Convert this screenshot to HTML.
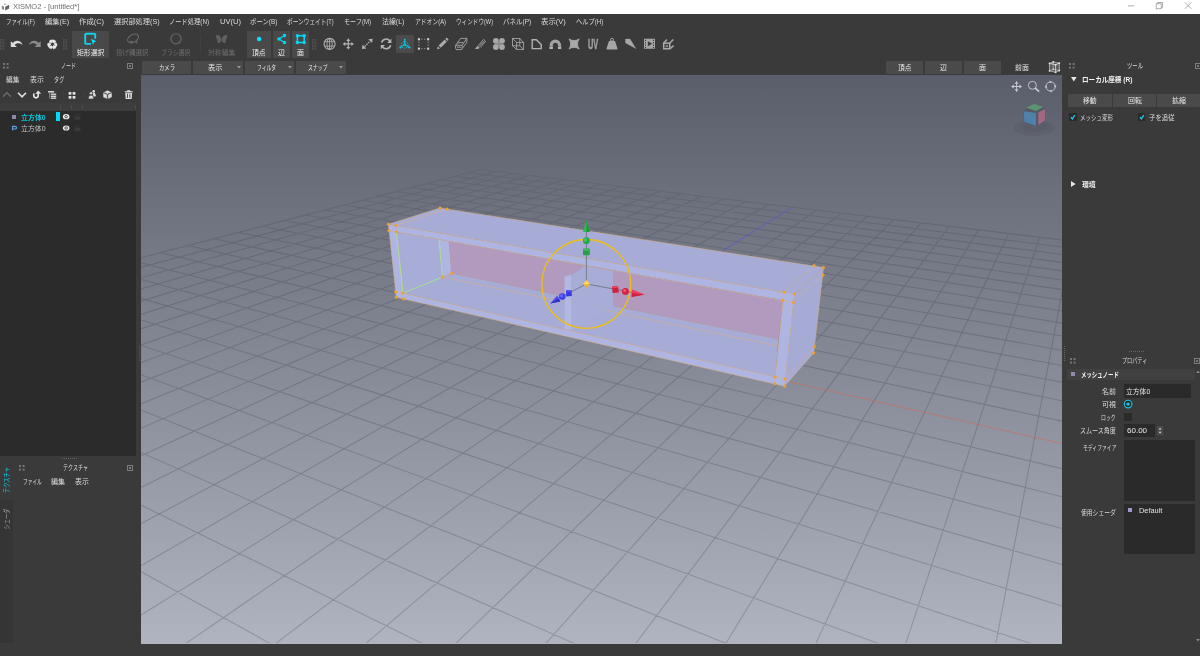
<!DOCTYPE html>
<html lang="ja">
<head>
<meta charset="utf-8">
<title>XISMO2 - [untitled*]</title>
<style>
html,body{margin:0;padding:0;}
body{width:1200px;height:656px;overflow:hidden;background:#3a3a3a;position:relative;
  font-family:"Liberation Sans","Noto Sans CJK JP",sans-serif;font-size:7.5px;color:#d8d8d8;line-height:1;}
.abs{position:absolute;}
.t{position:absolute;white-space:nowrap;line-height:10px;height:10px;transform-origin:0 50%;}
#title{left:0;top:0;width:1200px;height:14px;background:#fff;}
#title .t{opacity:.999;color:#6e6e6e;font-size:7.5px;left:13px;top:2px;}
#menubar .t{top:17px;font-size:7.5px;color:#dcdcdc;}
.btn{position:absolute;background:#4a4a4a;color:#e0e0e0;text-align:center;font-size:7.5px;line-height:13px;height:13px;}
.tool{position:absolute;text-align:center;font-size:7.5px;color:#dcdcdc;line-height:10px;}
.dim{color:#6e6e6e;}
.grip{position:absolute;width:5px;height:5px;}
.grip i{position:absolute;width:2px;height:2px;background:#666;}
.phead{position:absolute;font-size:7.5px;color:#ddd;line-height:10px;text-align:center;}
.maxb{position:absolute;width:4px;height:4px;border:1px solid #888;}
.maxb:after{content:"";position:absolute;left:1px;top:1px;width:2px;height:2px;background:#888;}
</style>
</head>
<body>
<!-- title bar -->
<div id="title" class="abs">
  <svg class="abs" style="left:1px;top:3px" width="9" height="8" viewBox="0 0 9 8"><path d="M0.8 2.4 L3 3.4 L3 7 L0.8 6 Z" fill="#8a8a8a"/><path d="M4.2 3.8 L8.2 1.8 L8.2 5.4 L4.2 7.4 Z" fill="#666"/><path d="M2.2 1 L4.2 0.4 L5.8 1.1 L3.8 2Z" fill="#aaa"/></svg>
  <div class="t">XISMO2 - [untitled*]</div>
  <svg class="abs" style="left:1125px;top:0" width="75" height="14" viewBox="1125 0 75 14" fill="none" stroke="#8a8a8a" stroke-width="0.7"><path d="M1128 5.9 H1134.2"/><rect x="1156.2" y="3.8" width="5" height="5"/><path d="M1157.6 3.8 V2.5 H1162.6 V7.4 H1161.2"/><path d="M1185 2.4 L1191.4 8.8 M1191.4 2.4 L1185 8.8"/></svg>
</div>

<span class="t" style="transform:scaleX(0.745);left:6.3px;top:17.0px;color:#dcdcdc;font-size:7.3px;">ファイル(F)</span>
<span class="t" style="transform:scaleX(0.999);left:45.0px;top:17.0px;color:#dcdcdc;font-size:7.3px;">編集(E)</span>
<span class="t" style="transform:scaleX(1.011);left:79.3px;top:17.0px;color:#dcdcdc;font-size:7.3px;">作成(C)</span>
<span class="t" style="transform:scaleX(0.987);left:113.7px;top:17.0px;color:#dcdcdc;font-size:7.3px;">選択部処理(S)</span>
<span class="t" style="transform:scaleX(0.858);left:169.3px;top:17.0px;color:#dcdcdc;font-size:7.3px;">ノード処理(N)</span>
<span class="t" style="transform:scaleX(1.035);left:219.7px;top:17.0px;color:#dcdcdc;font-size:7.3px;">UV(U)</span>
<span class="t" style="transform:scaleX(0.876);left:250.3px;top:17.0px;color:#dcdcdc;font-size:7.3px;">ボーン(B)</span>
<span class="t" style="transform:scaleX(0.778);left:287.3px;top:17.0px;color:#dcdcdc;font-size:7.3px;">ボーンウェイト(T)</span>
<span class="t" style="transform:scaleX(0.834);left:344.0px;top:17.0px;color:#dcdcdc;font-size:7.3px;">モーフ(M)</span>
<span class="t" style="transform:scaleX(0.948);left:381.7px;top:17.0px;color:#dcdcdc;font-size:7.3px;">法線(L)</span>
<span class="t" style="transform:scaleX(0.796);left:415.0px;top:17.0px;color:#dcdcdc;font-size:7.3px;">アドオン(A)</span>
<span class="t" style="transform:scaleX(0.767);left:456.0px;top:17.0px;color:#dcdcdc;font-size:7.3px;">ウィンドウ(W)</span>
<span class="t" style="transform:scaleX(0.895);left:502.7px;top:17.0px;color:#dcdcdc;font-size:7.3px;">パネル(P)</span>
<span class="t" style="transform:scaleX(1.015);left:541.0px;top:17.0px;color:#dcdcdc;font-size:7.3px;">表示(V)</span>
<span class="t" style="transform:scaleX(0.852);left:576.0px;top:17.0px;color:#dcdcdc;font-size:7.3px;">ヘルプ(H)</span>
<svg class="abs" style="left:0.2px;top:38.7px" width="5" height="11.3"><defs><pattern id="vg1" width="1.5" height="1.5" patternUnits="userSpaceOnUse"><rect width="0.9" height="0.9" fill="#565656"/></pattern></defs><rect width="4.4" height="11.3" fill="url(#vg1)"/></svg>
<svg class="abs" style="left:63.0px;top:38.7px" width="5" height="11.3"><defs><pattern id="vg2" width="1.5" height="1.5" patternUnits="userSpaceOnUse"><rect width="0.9" height="0.9" fill="#565656"/></pattern></defs><rect width="4.4" height="11.3" fill="url(#vg2)"/></svg>
<svg class="abs" style="left:312.0px;top:38.7px" width="5" height="11.3"><defs><pattern id="vg3" width="1.5" height="1.5" patternUnits="userSpaceOnUse"><rect width="0.9" height="0.9" fill="#565656"/></pattern></defs><rect width="4.4" height="11.3" fill="url(#vg3)"/></svg>
<div class="abs" style="left:72.0px;top:31.3px;width:37.3px;height:26.4px;background:#494949;"></div>
<span class="t" style="transform:scaleX(0.935);left:76.7px;top:48.0px;color:#f0f0f0;font-size:7.3px;">矩形選択</span>
<span class="t" style="transform:scaleX(0.888);left:116.3px;top:48.0px;color:#6c6c6c;font-size:7.3px;">投げ縄選択</span>
<span class="t" style="transform:scaleX(0.809);left:161.3px;top:48.0px;color:#6c6c6c;font-size:7.3px;">ブラシ選択</span>
<div class="abs" style="left:200.2px;top:34.7px;width:0.6px;height:18.6px;background:#404040;"></div>
<span class="t" style="transform:scaleX(0.935);left:208.0px;top:48.0px;color:#6c6c6c;font-size:7.3px;">対称編集</span>
<div class="abs" style="left:247.3px;top:31.3px;width:23.7px;height:26.4px;background:#494949;"></div>
<span class="t" style="transform:scaleX(0.932);left:252.4px;top:48.0px;color:#f0f0f0;font-size:7.3px;">頂点</span>
<div class="abs" style="left:273.0px;top:31.3px;width:17.0px;height:26.4px;background:#494949;"></div>
<span class="t" style="transform:scaleX(0.959);left:277.8px;top:48.0px;color:#f0f0f0;font-size:7.3px;">辺</span>
<div class="abs" style="left:291.7px;top:31.3px;width:17.3px;height:26.4px;background:#494949;"></div>
<span class="t" style="transform:scaleX(0.959);left:296.9px;top:48.0px;color:#f0f0f0;font-size:7.3px;">面</span>
<div class="abs" style="left:396.0px;top:35.0px;width:17.6px;height:17.7px;background:#4b4b4b;"></div>
<svg class="abs" style="left:0;top:28px;opacity:.999" width="700" height="32" viewBox="0 0 700 32">
<g transform="translate(0,-28)">
  <!-- undo / redo -->
  <path d="M10.8 41.2 L10.8 47 L16.9 47 L14.6 44.9 C16.6 43 19.6 42.6 22.6 45 C21.2 40.8 16 39.2 12.9 43 Z" fill="#dcdcdc"/>
  <path transform="translate(51.5,0) scale(-1,1)" d="M10.8 41.2 L10.8 47 L16.9 47 L14.6 44.9 C16.6 43 19.6 42.6 22.6 45 C21.2 40.8 16 39.2 12.9 43 Z" fill="#8c8c8c"/>
  <!-- recycle -->
  <text x="52.2" y="48.6" text-anchor="middle" font-family="'DejaVu Sans',sans-serif" font-size="13" fill="#e8e8e8" stroke="#e8e8e8" stroke-width="0.5">♻</text>
  <!-- rect select (cyan) -->
  <path d="M91 43.9 H86.2 Q85.2 43.9 85.2 42.9 V34.8 Q85.2 33.8 86.2 33.8 H94.2 Q95.2 33.8 95.2 34.8 V38.7" fill="none" stroke="#10d0ec" stroke-width="1.9"/>
  <path d="M91 38.7 L96.4 41.2 L94.1 42.3 L93.1 44.7 Z" fill="#00e4ff"/>
  <!-- lasso (dim) -->
  <g fill="none" stroke="#686868" stroke-width="1.1">
    <ellipse cx="133.1" cy="38.4" rx="5.9" ry="3.8" transform="rotate(-28 133.1 38.4)"/>
    <circle cx="131.4" cy="42.3" r="0.9"/>
  </g>
  <path d="M134.9 40.7 L138.3 42.1 L136.8 42.7 L136.4 44.2 Z" fill="#686868"/>
  <!-- brush select (dim) -->
  <circle cx="176" cy="38.8" r="5.1" fill="none" stroke="#686868" stroke-width="1.1"/>
  <path d="M177.6 40.6 L182 42 L180 42.8 L179.4 44.6 Z" fill="#6a6a6a" stroke="#3a3a3a" stroke-width="0.5"/>
  <!-- butterfly (dim) -->
  <g fill="#606060">
    <path d="M221.3 38.4 L219.6 35.5 Q217.4 34.8 215.9 35.1 Q216 38.8 217.5 40.3 Q216.8 42.6 218.3 43.2 Q220.7 42.9 221.3 41 Z"/>
    <path transform="translate(443.2,0) scale(-1,1)" d="M221.3 38.4 L219.6 35.5 Q217.4 34.8 215.9 35.1 Q216 38.8 217.5 40.3 Q216.8 42.6 218.3 43.2 Q220.7 42.9 221.3 41 Z"/>
  </g>
  <!-- vertex dot -->
  <circle cx="259.1" cy="39" r="2.2" fill="#00e0ff"/>
  <!-- edge -->
  <g fill="#00d8f4" stroke="#00d8f4" stroke-width="1.2">
    <path d="M284.5 35.5 L278.9 39 L284.5 42.5" fill="none"/>
    <circle cx="284.5" cy="35.5" r="1.1"/><circle cx="278.9" cy="39" r="1.1"/><circle cx="284.5" cy="42.5" r="1.1"/>
  </g>
  <!-- face -->
  <g fill="#00d8f4" stroke="#00d8f4">
    <rect x="297.4" y="35.7" width="6.8" height="6.8" fill="none" stroke-width="1.5"/>
    <circle cx="297.4" cy="35.7" r="1.75" stroke="none"/><circle cx="304.2" cy="35.7" r="1.75" stroke="none"/><circle cx="297.4" cy="42.5" r="1.75" stroke="none"/><circle cx="304.2" cy="42.5" r="1.75" stroke="none"/>
  </g>
  <!-- globe -->
  <g fill="none" stroke="#aeaeae" stroke-width="0.9">
    <circle cx="329.6" cy="43.9" r="5.5" stroke-width="1.1"/>
    <ellipse cx="329.6" cy="43.9" rx="2.6" ry="5.5"/>
    <path d="M329.6 38.4 V49.4 M324.6 41.7 H334.6 M324.6 46.1 H334.6"/>
  </g>
  <!-- move -->
  <g fill="#b4b4b4">
    <path d="M347.7 40.6 H348.9 V43.3 H351.6 V44.5 H348.9 V47.2 H347.7 V44.5 H345 V43.3 H347.7 Z"/>
    <path d="M348.3 38.3 L350.3 40.9 H346.3 Z M348.3 49.5 L350.3 46.9 H346.3 Z M342.7 43.9 L345.3 41.9 V45.9 Z M353.9 43.9 L351.3 41.9 V45.9 Z"/>
  </g>
  <!-- scale -->
  <g fill="#b4b4b4" stroke="#b4b4b4">
    <path d="M372.6 38.7 L368.3 39.2 L372.1 43 Z M362 49.1 L366.3 48.6 L362.5 44.8 Z" stroke="none"/>
    <path d="M364.6 46.5 L370.2 41.1" stroke-width="1.2" stroke-dasharray="1.6 0.9" fill="none"/>
  </g>
  <!-- rotate -->
  <g fill="none" stroke="#b4b4b4" stroke-width="1.6">
    <path d="M381.6 42.6 A4.6 4.6 0 0 1 389.8 41"/>
    <path d="M390.6 45.2 A4.6 4.6 0 0 1 382.4 46.8"/>
  </g>
  <path d="M391.4 38.6 V42.9 H387.2 Z M380.8 49.2 V44.9 H385 Z" fill="#b4b4b4"/>
  <!-- gizmo (cyan active) -->
  <g fill="none" stroke="#10c4e4" stroke-width="1.1">
    <path d="M404.75 44.6 V39.6 M404.75 44.6 L400.3 47.5 M404.75 44.6 L409.5 47.5"/>
    <circle cx="404.75" cy="44.8" r="3.3" stroke-width="0.9" stroke-dasharray="1.4 0.8"/>
  </g>
  <g fill="#10c4e4"><circle cx="404.75" cy="44.5" r="1.2"/><circle cx="404.75" cy="39.6" r="0.9"/><circle cx="400.3" cy="47.5" r="1"/><circle cx="409.5" cy="47.5" r="1"/></g>
  <!-- dotted rect -->
  <g fill="#d4d4d4">
    <rect x="417.9" y="38.2" width="2.1" height="2.1"/><rect x="427.1" y="38.2" width="2.1" height="2.1"/><rect x="417.9" y="47.6" width="2.1" height="2.1"/><rect x="427.1" y="47.6" width="2.1" height="2.1"/>
  </g>
  <g stroke="#9a9a9a" stroke-width="0.9" stroke-dasharray="1.4 1.4">
    <path d="M421.2 39.2 H426.6 M421.2 48.7 H426.6 M418.9 41.6 V47 M428.2 41.6 V47"/>
  </g>
  <!-- pencil -->
  <g fill="#ababab">
    <path d="M437 49.3 L437.8 46.3 L440 48.5 Z"/>
    <path d="M438.6 45.5 L444.6 39.5 L446.8 41.7 L440.8 47.7 Z"/>
    <path d="M445.3 38.8 L446 38.1 Q446.6 37.6 447.2 38.1 L448.2 39.1 Q448.7 39.7 448.2 40.3 L447.5 41 Z"/>
  </g>
  <!-- eraser -->
  <g fill="none" stroke="#a6a6a6" stroke-width="0.9" stroke-linejoin="round">
    <path d="M455.6 45.3 L460.6 38.4 H466.8 L462.2 45.3 Z"/>
    <path d="M455.6 45.3 V48.2 Q455.6 49.6 457 49.6 H461 Q462.2 49.6 462.2 48.4 V45.3 M462.2 48.6 L466.8 42.4 V38.4"/>
    <path d="M457.4 44.2 L458.6 42.6 H463.4 M457 47.2 H461"/>
  </g>
  <!-- highlighter -->
  <g fill="none" stroke="#a6a6a6" stroke-width="0.9" stroke-linejoin="round">
    <path d="M478.6 45.2 L483.6 39.4 L485.6 41.3 L480.6 47.2 Z"/>
    <path d="M480.2 44.8 L483.4 41.2 L484 41.8 L480.8 45.4 Z" stroke-width="0.6"/>
  </g>
  <path d="M474.8 48.9 L477.6 45.8 L479.6 47.8 L478.4 48.9 Z" fill="#a6a6a6"/>
  <!-- bandage -->
  <g fill="#a8a8a8"><circle cx="495.9" cy="40.8" r="2.9"/><circle cx="502" cy="40.8" r="2.9"/><circle cx="495.9" cy="47" r="2.9"/><circle cx="502" cy="47" r="2.9"/></g>
  <path d="M499 41.2 L501.7 43.9 L499 46.6 L496.3 43.9 Z" fill="#8e8e8e"/>
  <!-- wire cube -->
  <g fill="none" stroke="#a2a2a2" stroke-width="0.9">
    <rect x="512.5" y="38.5" width="7.3" height="7.3"/><rect x="516.6" y="42.4" width="7" height="7"/>
    <path d="M512.5 38.5 L516.6 42.4 M519.8 38.5 L523.6 42.4 M512.5 45.8 L516.6 49.4 M519.8 45.8 L523.6 49.4"/>
  </g>
  <!-- bevel -->
  <path d="M532.2 39.7 H536.3 L541.2 44.6 V48.6 H532.2 Z" fill="none" stroke="#b2b2b2" stroke-width="1.4"/>
  <!-- arch -->
  <path d="M549.6 48.8 V45.4 A5.8 5.8 0 0 1 561.2 45.4 V48.8 H558 V45.4 A2.6 2.6 0 0 0 552.8 45.4 V48.8 Z" fill="#a4a4a4"/>
  <path d="M549.6 47 H552.8 M558 47 H561.2" stroke="#3a3a3a" stroke-width="0.5"/>
  <path d="M549.6 47.3 H552.8 V48.8 H549.6 Z M558 47.3 H561.2 V48.8 H558 Z" fill="#c8c8c8"/>
  <!-- pinch star -->
  <path d="M569 38.9 Q574.05 42.3 579.2 38.9 Q575.8 43.9 579.2 49 Q574.05 45.6 569 49 Q572.4 43.9 569 38.9 Z" fill="#a8a8a8" stroke="#a8a8a8" stroke-width="0.9" stroke-linejoin="round"/>
  <!-- UV -->
  <text x="587.9" y="49.2" font-family="'Liberation Sans',sans-serif" font-weight="bold" font-size="14" fill="#a2a2a2" stroke="#a2a2a2" stroke-width="0.45" textLength="10.2" lengthAdjust="spacingAndGlyphs">UV</text>
  <!-- weight -->
  <path d="M609 41 H615 L617.5 48.6 Q617.6 49.4 616.8 49.4 H607.1 Q606.3 49.4 606.5 48.6 Z" fill="#a6a6a6"/>
  <circle cx="612" cy="39.8" r="1.5" fill="none" stroke="#a6a6a6" stroke-width="1"/>
  <!-- knife -->
  <path d="M625.2 39 L630 38.7 L636.3 49 L625.4 43 Z" fill="#a6a6a6"/>
  <!-- film -->
  <rect x="644" y="38.7" width="11" height="10.1" fill="#a4a4a4"/>
  <path d="M647.9 41.3 L652.2 43.8 L647.9 46.3 Z" fill="#3a3a3a"/>
  <g fill="#3a3a3a"><rect x="645" y="39.8" width="1" height="1.2"/><rect x="645" y="42.2" width="1" height="1.2"/><rect x="645" y="44.6" width="1" height="1.2"/><rect x="645" y="47" width="1" height="1.2"/><rect x="653" y="39.8" width="1" height="1.2"/><rect x="653" y="42.2" width="1" height="1.2"/><rect x="653" y="44.6" width="1" height="1.2"/><rect x="653" y="47" width="1" height="1.2"/></g>
  <!-- cube with handle -->
  <g fill="none" stroke="#aaaaaa" stroke-width="1.5">
    <rect x="663.7" y="43.2" width="6" height="5.6"/>
    <path d="M663.7 43 L667 39.6 M670 43 L673.3 39.6 M670 48.8 L673.6 45.6"/>
  </g>
  <rect x="665.6" y="45" width="2.4" height="2.2" fill="#8a8a8a"/>
</g>
</svg>

<svg class="abs" style="left:2.6px;top:62.8px" width="6" height="6" viewBox="0 0 6 6" fill="#757575"><rect x="0" y="0" width="2" height="2"/><rect x="3.6" y="0" width="2" height="2"/><rect x="0" y="3.6" width="2" height="2"/><rect x="3.6" y="3.6" width="2" height="2"/></svg>
<span class="t" style="transform:scaleX(0.690);left:60.7px;top:61.0px;color:#dcdcdc;font-size:7.3px;">ノード</span>
<svg class="abs" style="left:127.2px;top:62.8px" width="6" height="6" viewBox="0 0 6 6"><rect x="0.5" y="0.5" width="5" height="5" fill="none" stroke="#7c7c7c" stroke-width="1"/><rect x="2" y="2" width="2" height="2" fill="#7c7c7c"/></svg>
<span class="t" style="transform:scaleX(0.918);left:6.4px;top:75.0px;color:#dcdcdc;font-size:7.3px;">編集</span>
<span class="t" style="transform:scaleX(0.959);left:30.1px;top:75.0px;color:#dcdcdc;font-size:7.3px;">表示</span>
<span class="t" style="transform:scaleX(0.706);left:53.9px;top:75.0px;color:#dcdcdc;font-size:7.3px;">タグ</span>
<div class="abs" style="left:0.0px;top:103.3px;width:136.2px;height:7.7px;background:#3d3d3d;"></div>
<div class="abs" style="left:59.6px;top:105.4px;width:0.8px;height:3.4px;background:#4e4e4e;"></div>
<div class="abs" style="left:71.0px;top:105.4px;width:0.8px;height:3.4px;background:#4e4e4e;"></div>
<div class="abs" style="left:82.2px;top:105.4px;width:0.8px;height:3.4px;background:#4e4e4e;"></div>
<div class="abs" style="left:135.0px;top:105.4px;width:0.8px;height:3.4px;background:#4e4e4e;"></div>
<div class="abs" style="left:0.0px;top:111.0px;width:136.0px;height:345.3px;background:#2b2b2b;"></div>
<div class="abs" style="left:12.1px;top:114.9px;width:4.0px;height:4.0px;background:#8a8aa6;"></div>
<span class="t" style="transform:scaleX(1.022);left:20.8px;top:113.0px;color:#10c4dc;font-size:6.8px;font-weight:bold;">立方体0</span>
<div class="abs" style="left:56.0px;top:112.2px;width:3.9px;height:8.6px;background:#00dcf6;"></div>
<span class="t" style="transform:scaleX(1.014);left:20.8px;top:124.0px;color:#c8c8c8;font-size:6.8px;">立方体0</span>
<svg class="abs" style="left:0;top:86px" width="137" height="50" viewBox="0 86 137 50">
  <path d="M3 96.8 L6.95 92.7 L10.9 96.8" fill="none" stroke="#6c6c6c" stroke-width="1.3"/>
  <path d="M18.1 92.8 L22.05 96.8 L26 92.8" fill="none" stroke="#e2e2e2" stroke-width="1.6"/>
  <path d="M33.8 93.4 V95.6 A2.2 2.2 0 0 0 38.2 95.6 V93" fill="none" stroke="#e2e2e2" stroke-width="1.7"/>
  <path d="M38.2 90.4 L41.2 93.8 H35.2 Z" fill="#e2e2e2"/>
  <g fill="#d8d8d8">
    <rect x="48.1" y="91" width="6" height="1.6"/><rect x="50.8" y="93.5" width="5.4" height="1.4"/><rect x="50.8" y="95.6" width="5.4" height="1.4"/><rect x="50.8" y="97.5" width="5.4" height="1.4"/>
    <rect x="49" y="92.6" width="0.7" height="5.8" fill="#999"/>
  </g>
  <rect x="63.4" y="92" width="0.6" height="5.6" fill="#454545"/><rect x="83" y="92" width="0.6" height="5.6" fill="#454545"/>
  <g fill="#e2e2e2"><rect x="68.6" y="92" width="2.8" height="2.7"/><rect x="72.6" y="92" width="2.8" height="2.7"/><rect x="68.6" y="96" width="2.8" height="2.7"/><rect x="72.6" y="96" width="2.8" height="2.7"/></g>
  <!-- people -->
  <g fill="#dcdcdc">
    <circle cx="93.7" cy="91.2" r="1.3"/><path d="M92.8 92.6 H94.6 L95.9 95.6 Q96 96.6 95 96.6 H93.4 Z"/>
    <circle cx="91" cy="93.2" r="1.5" stroke="#3a3a3a" stroke-width="0.5"/><path d="M88.6 98.9 V97.4 Q88.6 95.2 91 95.2 Q93.4 95.2 93.4 97.4 V98.9 Z" stroke="#3a3a3a" stroke-width="0.5"/>
  </g>
  <!-- cube -->
  <g fill="#dcdcdc" stroke="#3a3a3a" stroke-width="0.5" stroke-linejoin="round">
    <path d="M107.5 90.2 L112 92.2 L107.5 94.2 L103 92.2 Z"/>
    <path d="M103 92.6 L107.3 94.6 V99.2 L103 97.2 Z"/>
    <path d="M112 92.6 L107.8 94.6 V99.2 L112 97.2 Z"/>
  </g>
  <!-- trash -->
  <g fill="#e0e0e0">
    <path d="M124.7 91.2 H132.7 V92.3 H124.7 Z M127.2 90.2 H130.2 V91.2 H127.2 Z"/>
    <path d="M125.3 92.8 H132.1 L131.7 99 H125.7 Z"/>
  </g>
  <path d="M127.5 93.6 V98 M129.9 93.6 V98" stroke="#3a3a3a" stroke-width="0.9"/>
  <!-- row icons: eye / lock -->
  <g id="rowic">
    <ellipse cx="66.15" cy="116.7" rx="3.3" ry="2.6" fill="#ececec"/><circle cx="66.15" cy="116.7" r="1.25" fill="none" stroke="#2b2b2b" stroke-width="0.8"/>
    <rect x="74.3" y="116.2" width="6.2" height="3.5" rx="0.4" fill="#393939"/><path d="M75.6 116.4 V115.6 A1.8 1.8 0 0 1 79.2 115.6 V116.4" fill="none" stroke="#393939" stroke-width="0.9"/>
  </g>
  <g transform="translate(0,11.3)">
    <ellipse cx="66.15" cy="116.7" rx="3.3" ry="2.6" fill="#ececec"/><circle cx="66.15" cy="116.7" r="1.25" fill="none" stroke="#2b2b2b" stroke-width="0.8"/>
    <rect x="74.3" y="116.2" width="6.2" height="3.5" rx="0.4" fill="#393939"/><path d="M75.6 116.4 V115.6 A1.8 1.8 0 0 1 79.2 115.6 V116.4" fill="none" stroke="#393939" stroke-width="0.9"/>
  </g>
  <!-- P icon -->
  <path d="M12.6 125.9 V130.3" stroke="#5aa2ea" stroke-width="1.3" fill="none"/>
  <path d="M12.6 126.3 H15 Q16.5 126.3 16.5 127.7 Q16.5 129 15 129 H13.2" stroke="#5aa2ea" stroke-width="1.2" fill="none"/>
</svg>

<div class="abs" style="left:62px;top:458.3px;width:15px;height:1px;background-image:repeating-linear-gradient(90deg,#666 0 1px,transparent 1px 2px)"></div>
<div class="abs" style="left:0.0px;top:461.0px;width:13.0px;height:182.0px;background:#353535;"></div>
<div class="abs" style="left:0.0px;top:461.0px;width:13.0px;height:39.0px;background:#3a3a3a;"></div>
<span class="t" style="transform:scaleX(0.718);left:7.2px;top:480.4px;color:#10c4dc;font-size:7.3px;opacity:.999;transform-origin:0 0;rotate:-90deg;translate:-5px 13px">テクスチャ</span>
<span class="t" style="transform:scaleX(0.719);left:7.2px;top:518.5px;color:#a0a0a0;font-size:7.3px;opacity:.999;transform-origin:0 0;rotate:-90deg;translate:-5px 10.5px">シェーダ</span>
<svg class="abs" style="left:18.8px;top:465.0px" width="6" height="6" viewBox="0 0 6 6" fill="#757575"><rect x="0" y="0" width="2" height="2"/><rect x="3.6" y="0" width="2" height="2"/><rect x="0" y="3.6" width="2" height="2"/><rect x="3.6" y="3.6" width="2" height="2"/></svg>
<span class="t" style="transform:scaleX(0.691);left:63.3px;top:463.0px;color:#dcdcdc;font-size:7.3px;">テクスチャ</span>
<svg class="abs" style="left:127.3px;top:465.0px" width="6" height="6" viewBox="0 0 6 6"><rect x="0.5" y="0.5" width="5" height="5" fill="none" stroke="#7c7c7c" stroke-width="1"/><rect x="2" y="2" width="2" height="2" fill="#7c7c7c"/></svg>
<span class="t" style="transform:scaleX(0.644);left:22.5px;top:477.0px;color:#dcdcdc;font-size:7.3px;">ファイル</span>
<span class="t" style="transform:scaleX(0.959);left:51.3px;top:477.0px;color:#dcdcdc;font-size:7.3px;">編集</span>
<span class="t" style="transform:scaleX(0.952);left:75.3px;top:477.0px;color:#dcdcdc;font-size:7.3px;">表示</span>
<div class="abs" style="left:142.0px;top:61.0px;width:49.0px;height:13.0px;background:#4a4a4a;"></div>
<div class="abs" style="left:193.0px;top:61.0px;width:50.0px;height:13.0px;background:#4a4a4a;"></div>
<div class="abs" style="left:245.0px;top:61.0px;width:49.0px;height:13.0px;background:#4a4a4a;"></div>
<div class="abs" style="left:296.0px;top:61.0px;width:50.0px;height:13.0px;background:#4a4a4a;"></div>
<div class="abs" style="left:886.0px;top:61.0px;width:37.3px;height:13.0px;background:#4a4a4a;"></div>
<div class="abs" style="left:925.0px;top:61.0px;width:37.3px;height:13.0px;background:#4a4a4a;"></div>
<div class="abs" style="left:964.0px;top:61.0px;width:37.0px;height:13.0px;background:#4a4a4a;"></div>
<span class="t" style="transform:scaleX(0.731);left:158.5px;top:63.0px;color:#e8e8e8;font-size:7.3px;">カメラ</span>
<span class="t" style="transform:scaleX(0.987);left:207.6px;top:63.0px;color:#e8e8e8;font-size:7.3px;">表示</span>
<span class="t" style="transform:scaleX(0.654);left:256.6px;top:63.0px;color:#e8e8e8;font-size:7.3px;">フィルタ</span>
<span class="t" style="transform:scaleX(0.668);left:307.5px;top:63.0px;color:#e8e8e8;font-size:7.3px;">スナップ</span>
<svg class="abs" style="left:236.5px;top:66.3px" width="4" height="3" viewBox="0 0 4 3"><path d="M0 0H4L2 2.4Z" fill="#999"/></svg>
<svg class="abs" style="left:287.5px;top:66.3px" width="4" height="3" viewBox="0 0 4 3"><path d="M0 0H4L2 2.4Z" fill="#999"/></svg>
<svg class="abs" style="left:339.3px;top:66.3px" width="4" height="3" viewBox="0 0 4 3"><path d="M0 0H4L2 2.4Z" fill="#999"/></svg>
<span class="t" style="transform:scaleX(0.925);left:898.0px;top:63.0px;color:#e8e8e8;font-size:7.3px;">頂点</span>
<span class="t" style="transform:scaleX(0.959);left:940.3px;top:63.0px;color:#e8e8e8;font-size:7.3px;">辺</span>
<span class="t" style="transform:scaleX(0.959);left:979.0px;top:63.0px;color:#e8e8e8;font-size:7.3px;">面</span>
<span class="t" style="transform:scaleX(0.946);left:1015.0px;top:63.0px;color:#e8e8e8;font-size:7.3px;">前面</span>
<svg class="abs" style="left:1047px;top:60px" width="15" height="14" viewBox="1047 60 15 14"><g fill="#777" fill-opacity="0.55" stroke="#cfcfcf" stroke-width="0.7" stroke-linejoin="round"><path d="M1049.5 63.4 L1053.2 61.9 L1059.3 63.2 L1055.6 64.8 Z"/><path d="M1049.5 63.4 L1055.6 64.8 V72.3 L1049.5 70.8 Z"/><path d="M1055.6 64.8 L1059.3 63.2 V70.5 L1055.6 72.3 Z"/><path d="M1053.2 61.9 V69.3 L1049.5 70.8 M1053.2 69.3 L1059.3 70.5" fill="none" stroke-width="0.5"/></g><g fill="#e4e4e4"><circle cx="1049.5" cy="63.4" r="0.9"/><circle cx="1053.2" cy="61.9" r="0.9"/><circle cx="1059.3" cy="63.2" r="0.9"/><circle cx="1055.6" cy="64.8" r="0.9"/><circle cx="1049.5" cy="70.8" r="0.9"/><circle cx="1055.6" cy="72.3" r="0.9"/><circle cx="1059.3" cy="70.5" r="0.9"/><circle cx="1053.2" cy="69.3" r="0.8"/></g></svg>
<svg class="abs" style="left:1069.3px;top:63.2px" width="6" height="6" viewBox="0 0 6 6" fill="#757575"><rect x="0" y="0" width="2" height="2"/><rect x="3.6" y="0" width="2" height="2"/><rect x="0" y="3.6" width="2" height="2"/><rect x="3.6" y="3.6" width="2" height="2"/></svg>
<span class="t" style="transform:scaleX(0.731);left:1126.8px;top:61.0px;color:#dcdcdc;font-size:7.3px;">ツール</span>
<svg class="abs" style="left:1194.5px;top:63.0px" width="6" height="6" viewBox="0 0 6 6"><rect x="0.5" y="0.5" width="5" height="5" fill="none" stroke="#7c7c7c" stroke-width="1"/><rect x="2" y="2" width="2" height="2" fill="#7c7c7c"/></svg>
<svg class="abs" style="left:1070.6px;top:77.4px" width="6" height="5" viewBox="0 0 6 5"><path d="M0 0H5.6L2.8 4.6Z" fill="#e8e8e8"/></svg>
<span class="t" style="transform:scaleX(0.901);left:1081.6px;top:75.0px;color:#f4f4f4;font-size:7.3px;font-weight:bold;">ローカル座標 (R)</span>
<div class="abs" style="left:1068.2px;top:93.7px;width:43.6px;height:12.9px;background:#4a4a4a;"></div>
<div class="abs" style="left:1113.2px;top:93.7px;width:42.5px;height:12.9px;background:#4a4a4a;"></div>
<div class="abs" style="left:1157.2px;top:93.7px;width:42.8px;height:12.9px;background:#4a4a4a;"></div>
<span class="t" style="transform:scaleX(0.939);left:1083.3px;top:96.0px;color:#e8e8e8;font-size:7.3px;">移動</span>
<span class="t" style="transform:scaleX(0.946);left:1127.5px;top:96.0px;color:#e8e8e8;font-size:7.3px;">回転</span>
<span class="t" style="transform:scaleX(0.946);left:1171.8px;top:96.0px;color:#e8e8e8;font-size:7.3px;">拡縮</span>
<div class="abs" style="left:1069.2px;top:112.9px;width:7.9px;height:7.9px;background:#2a2a2a;"></div>
<svg class="abs" style="left:1069.2px;top:112.9px" width="8" height="8" viewBox="0 0 8 8"><path d="M2 4.2L3.4 5.8L5.8 2" fill="none" stroke="#18d0f0" stroke-width="1.3"/></svg>
<div class="abs" style="left:1137.5px;top:112.9px;width:7.9px;height:7.9px;background:#2a2a2a;"></div>
<svg class="abs" style="left:1137.5px;top:112.9px" width="8" height="8" viewBox="0 0 8 8"><path d="M2 4.2L3.4 5.8L5.8 2" fill="none" stroke="#18d0f0" stroke-width="1.3"/></svg>
<span class="t" style="transform:scaleX(0.756);left:1079.9px;top:113.0px;color:#dcdcdc;font-size:7.3px;">メッシュ変形</span>
<span class="t" style="transform:scaleX(0.877);left:1148.6px;top:113.0px;color:#dcdcdc;font-size:7.3px;">子を追従</span>
<svg class="abs" style="left:1071.2px;top:181.4px" width="5" height="6" viewBox="0 0 5 6"><path d="M0 0V6L4.6 3Z" fill="#e8e8e8"/></svg>
<span class="t" style="transform:scaleX(0.932);left:1081.6px;top:180.0px;color:#f4f4f4;font-size:7.3px;font-weight:bold;">環境</span>
<div class="abs" style="left:1063.9px;top:346px;width:1px;height:15.5px;background-image:repeating-linear-gradient(#666 0 1px,transparent 1px 2px)"></div>
<div class="abs" style="left:138.8px;top:346px;width:1px;height:15.5px;background-image:repeating-linear-gradient(#555 0 1px,transparent 1px 2px)"></div>
<div class="abs" style="left:1128.8px;top:351.3px;width:15px;height:1px;background-image:repeating-linear-gradient(90deg,#666 0 1px,transparent 1px 2px)"></div>
<svg class="abs" style="left:1069.7px;top:357.7px" width="6" height="6" viewBox="0 0 6 6" fill="#757575"><rect x="0" y="0" width="2" height="2"/><rect x="3.6" y="0" width="2" height="2"/><rect x="0" y="3.6" width="2" height="2"/><rect x="3.6" y="3.6" width="2" height="2"/></svg>
<span class="t" style="transform:scaleX(0.702);left:1122.0px;top:356.0px;color:#dcdcdc;font-size:7.3px;">プロパティ</span>
<svg class="abs" style="left:1194.0px;top:358.0px" width="6" height="6" viewBox="0 0 6 6"><rect x="0.5" y="0.5" width="5" height="5" fill="none" stroke="#7c7c7c" stroke-width="1"/><rect x="2" y="2" width="2" height="2" fill="#7c7c7c"/></svg>
<div class="abs" style="left:1066.8px;top:368.5px;width:128.1px;height:11.7px;background:#414141;"></div>
<div class="abs" style="left:1070.8px;top:372.2px;width:4.4px;height:4.2px;background:#8c8cac;"></div>
<span class="t" style="transform:scaleX(0.740);left:1080.9px;top:370.0px;color:#f4f4f4;font-size:7.3px;font-weight:bold;">メッシュノード</span>
<svg class="abs" style="left:1196px;top:369.5px" width="4" height="3" viewBox="0 0 4 3"><path d="M0 3H4L2 0.4Z" fill="#888"/></svg>
<span class="t" style="transform:scaleX(0.959);left:1102.0px;top:387.0px;color:#dcdcdc;font-size:7.3px;">名前</span>
<div class="abs" style="left:1123.8px;top:384.3px;width:67.0px;height:13.4px;background:#2a2a2a;"></div>
<span class="t" style="transform:scaleX(0.932);left:1125.8px;top:387.0px;color:#e8e8e8;font-size:7.3px;">立方体0</span>
<span class="t" style="transform:scaleX(0.959);left:1102.0px;top:400.0px;color:#dcdcdc;font-size:7.3px;">可視</span>
<svg class="abs" style="left:1123px;top:398.6px" width="10" height="10" viewBox="0 0 10 10"><circle cx="5.1" cy="5.1" r="3.8" fill="#2a2a2a" stroke="#18c8e8" stroke-width="1.1"/><circle cx="5.1" cy="5.1" r="1.7" fill="#18c8e8"/></svg>
<span class="t" style="transform:scaleX(0.672);left:1101.3px;top:413.0px;color:#dcdcdc;font-size:7.3px;">ロック</span>
<div class="abs" style="left:1123.8px;top:412.8px;width:8.4px;height:8.4px;background:#2a2a2a;"></div>
<span class="t" style="transform:scaleX(0.824);left:1080.2px;top:426.0px;color:#dcdcdc;font-size:7.3px;">スムース角度</span>
<div class="abs" style="left:1123.8px;top:424.2px;width:30.8px;height:12.8px;background:#2a2a2a;"></div>
<span class="t" style="transform:scaleX(1.100);left:1126.5px;top:426.0px;color:#e8e8e8;font-size:7.3px;">60.00</span>
<div class="abs" style="left:1156.6px;top:425.5px;width:6.1px;height:9.4px;background:#4a4a4a;"></div>
<svg class="abs" style="left:1156.6px;top:425.5px" width="6.1" height="9.4" viewBox="0 0 6.1 9.4"><path d="M1.6 3.6L3.05 1.8L4.5 3.6Z M1.6 5.8L3.05 7.6L4.5 5.8Z" fill="#ddd"/></svg>
<span class="t" style="transform:scaleX(0.662);left:1082.5px;top:443.0px;color:#dcdcdc;font-size:7.3px;">モディファイア</span>
<div class="abs" style="left:1123.8px;top:439.6px;width:71.1px;height:61.4px;background:#2a2a2a;"></div>
<span class="t" style="transform:scaleX(0.795);left:1081.2px;top:508.0px;color:#dcdcdc;font-size:7.3px;">使用シェーダ</span>
<div class="abs" style="left:1123.8px;top:504.3px;width:71.1px;height:49.3px;background:#2a2a2a;"></div>
<div class="abs" style="left:1128.1px;top:507.9px;width:3.7px;height:3.7px;background:#9a9ad0;"></div>
<span class="t" style="transform:scaleX(1.012);left:1138.9px;top:506.0px;color:#e0e0e0;font-size:7.3px;">Default</span>
<svg class="abs" style="left:1196px;top:638.5px" width="4" height="3" viewBox="0 0 4 3"><path d="M0 0H4L2 2.6Z" fill="#888"/></svg>

<!-- VIEWPORT -->
<svg id="vp" class="abs" style="left:141px;top:75px" width="921" height="569" viewBox="141 75 921 569">
  <defs>
    <linearGradient id="bg" x1="0" y1="0" x2="0" y2="1">
      <stop offset="0" stop-color="#5a5e6a"/>
      <stop offset="1" stop-color="#b0b4c0"/>
    </linearGradient>
    <linearGradient id="fogg" gradientUnits="userSpaceOnUse" x1="0" y1="165" x2="0" y2="643">
      <stop offset="0" stop-color="#fff" stop-opacity="0.5"/>
      <stop offset="0.14" stop-color="#fff" stop-opacity="0.9"/>
      <stop offset="0.25" stop-color="#fff" stop-opacity="1"/>
      <stop offset="1" stop-color="#fff" stop-opacity="1"/>
    </linearGradient>
    <mask id="fog" maskUnits="userSpaceOnUse" x="141" y="75" width="921" height="568"><rect x="141" y="75" width="921" height="568" fill="url(#fogg)"/></mask>
  </defs>
  <rect x="141" y="75" width="921" height="569" fill="url(#bg)"/>
  <g fill="none" mask="url(#fog)"><path stroke="#3c404c" stroke-width="1.05" stroke-opacity="0.27" d="M480.9,169.4 L135.0,259.3 M496.9,171.3 L135.0,269.0 M513.3,173.3 L135.0,279.4 M530.1,175.4 L135.0,290.7 M547.3,177.5 L135.0,303.0 M564.9,179.6 L135.0,316.3 M583.0,181.8 L135.0,330.9 M601.5,184.0 L135.0,347.0 M620.5,186.4 L135.0,364.7 M640.1,188.7 L135.0,384.4 M660.1,191.2 L135.0,406.3 M680.6,193.7 L135.0,430.9 M701.8,196.2 L135.0,458.7 M723.5,198.9 L135.0,490.3 M745.8,201.6 L135.0,526.8 M768.7,204.4 L135.0,569.1 M586.8,335.9 L135.0,618.9 M816.6,210.2 L176.3,650.0 M841.6,213.2 L267.2,650.0 M867.3,216.3 L358.1,650.0 M893.8,219.6 L449.0,650.0 M921.2,222.9 L539.9,650.0 M949.4,226.3 L630.8,650.0 M978.5,229.8 L721.8,650.0 M1008.6,233.5 L812.7,650.0 M1039.6,237.3 L903.7,650.0 M1068.0,260.9 L994.6,650.0 M480.9,169.4 L1068.0,240.7 M468.1,172.7 L1068.0,247.8 M454.8,176.2 L1068.0,255.3 M440.9,179.8 L1068.0,263.2 M426.5,183.5 L1068.0,271.7 M411.4,187.4 L1068.0,280.8 M395.6,191.5 L1068.0,290.5 M379.1,195.8 L1068.0,300.9 M361.9,200.3 L1068.0,312.0 M343.8,205.0 L1068.0,324.1 M324.8,210.0 L1068.0,337.1 M304.9,215.1 L1068.0,351.3 M283.9,220.6 L1068.0,366.7 M261.8,226.3 L1068.0,383.5 M238.6,232.4 L1068.0,402.0 M214.0,238.8 L1068.0,422.4 M188.0,245.5 L586.8,335.9 M160.4,252.7 L1068.0,470.1 M135.0,261.2 L1068.0,498.3 M135.0,277.8 L1068.0,530.1 M135.0,296.6 L1068.0,566.3 M135.0,318.2 L1068.0,607.8 M135.0,343.2 L1050.2,650.0 M135.0,372.6 L896.5,650.0 M135.0,407.6 L742.8,650.0 M135.0,449.9 L589.0,650.0 M135.0,502.1 L435.4,650.0 M135.0,568.2 L281.7,650.0"/><path stroke="#5054d8" stroke-width="0.95" stroke-opacity="0.8" d="M792.3,207.2 L586.8,335.9"/><path stroke="#e06050" stroke-width="0.85" stroke-opacity="0.6" d="M586.8,335.9 L1068.0,444.9"/></g>
  <g id="box" stroke-linejoin="round">
  <!-- top face -->
  <polygon points="388.4,224.3 440,208 823.5,267.6 794.3,294.1" fill="#a7acd7"/>
  <!-- right side -->
  <polygon points="794.3,294.1 823.5,267.6 813.7,352.9 784.5,386.2" fill="#a6abd6"/>
  <!-- inner: left wall, back strip, floor -->
  <polygon points="396.4,231.9 439,239.5 442.4,277.1 403,293.1" fill="#a8add8"/>
  <polygon points="439,239.5 449,241.3 451.6,273.3 442.4,277.1" fill="#b0b6e2"/>
  <polygon points="403,293.1 442.4,277.1 451.6,273.3 778.3,339.1 775.3,376.9" fill="#a7acd6"/>
  <!-- pink back wall -->
  <polygon points="449,241.3 782.9,300.3 778.6,339.1 451.6,273.3" fill="#b19abe"/>
  <!-- divider -->
  <polygon points="571.3,274.9 585,266.3 613.1,271 613.1,306.2 571.3,329.8" fill="#a8add7"/>
  <polygon points="564.6,276.4 571.3,274.9 571.3,330.2 564.6,329" fill="#b3b8e3"/>
  <!-- front ring -->
  <path fill-rule="evenodd" fill="#afb5e2" d="M388.4,224.3 L794.3,294.1 L784.5,386.2 L396.3,297.3 Z M396.4,231.9 L403,293.1 L775.3,376.9 L782.9,300.3 Z"/>
  <!-- edges -->
  <g fill="none" stroke="#dcb07c" stroke-width="0.75" stroke-opacity="0.68">
    <path d="M388.4,224.3 L440,208 L823.5,267.6 L794.3,294.1 Z"/>
    <path d="M395.9,225.5 L447.1,209.1 M784,292.3 L814.2,265.5"/>
    <path d="M823.5,267.6 L813.7,352.9 L784.5,386.2 M793.4,302.6 L823.1,275.1 M785.1,379.1 L814.4,346.5"/>
    <path d="M388.4,224.3 L396.3,297.3 L784.5,386.2 L794.3,294.1"/>
    <path d="M388.9,230.5 L793.4,302.6 M395.6,291.7 L785.1,379.1 M395.9,225.5 L403.5,298.9 M784,292.3 L774.6,383.7"/>
    <path d="M442.4,277.1 L564.6,301.9 M605.2,310.4 L777.8,346" stroke-opacity="0.7"/>
    <path d="M451.6,273.3 L564.6,296.2 M613.1,306 L778.3,339.1 M451.6,273.3 L449,241.3" stroke="#c8a0a0" stroke-opacity="0.6"/>
    <path d="M442.4,277.1 L451.6,273.3" />
  </g>
  <!-- green selected edges -->
  <path d="M396.4,231.9 L403,293.1 L442.4,277.1 L439,239.5" fill="none" stroke="#a8e890" stroke-width="0.9"/>
  <!-- vertices -->
  <g fill="#f0a030">
    <circle cx="440" cy="208" r="1.5"/><circle cx="447.1" cy="209.1" r="1.5"/><circle cx="388.4" cy="224.3" r="1.5"/><circle cx="395.9" cy="225.5" r="1.5"/>
    <circle cx="388.9" cy="230.5" r="1.5"/><circle cx="396.4" cy="231.9" r="1.5"/><circle cx="395.6" cy="291.7" r="1.5"/><circle cx="403" cy="293.1" r="1.5"/>
    <circle cx="396.3" cy="297.3" r="1.5"/><circle cx="403.5" cy="298.9" r="1.5"/><circle cx="442.4" cy="277.1" r="1.5"/><circle cx="451.6" cy="273.3" r="1.5"/>
    <circle cx="814.2" cy="265.5" r="1.5"/><circle cx="823.5" cy="267.6" r="1.5"/><circle cx="823.1" cy="275.1" r="1.5"/><circle cx="784" cy="292.3" r="1.5"/>
    <circle cx="794.3" cy="294.1" r="1.5"/><circle cx="782.9" cy="300.3" r="1.5"/><circle cx="793.4" cy="302.6" r="1.5"/><circle cx="775.3" cy="376.9" r="1.5"/>
    <circle cx="785.1" cy="379.1" r="1.5"/><circle cx="774.6" cy="383.7" r="1.5"/><circle cx="784.5" cy="386.2" r="1.5"/><circle cx="814.4" cy="346.5" r="1.5"/><circle cx="813.7" cy="352.9" r="1.5"/>
  </g>
</g>
<g id="gizmo">
  <circle cx="586.3" cy="283.9" r="44.4" fill="none" stroke="#ecbc20" stroke-width="1.35"/>
  <g stroke="#666a76" stroke-width="0.75" fill="none">
    <path d="M586.4,283.9 L586.4,230 M586.4,283.9 L632,292.4 M586.4,283.9 L557,299.4"/>
  </g>
  <!-- green Y -->
  <rect x="583" y="248.6" width="6.8" height="6.6" rx="0.8" fill="#28a048"/>
  <rect x="583" y="248.6" width="6.8" height="2" rx="0.8" fill="#40b860"/>
  <circle cx="586.4" cy="240.7" r="3.4" fill="#28a848"/>
  <circle cx="585.6" cy="239.9" r="1.6" fill="#48c468"/>
  <polygon points="586.4,220 589.8,232 583,232" fill="#30b850"/>
  <polygon points="586.4,220 589.8,232 586.4,232" fill="#209840"/>
  <!-- red X -->
  <polygon points="612,286.3 618,286.2 618.8,292.6 612.6,292.9" fill="#d02040"/>
  <polygon points="612,286.3 618,286.2 618.4,287.8 612.2,288" fill="#e84860"/>
  <circle cx="625.4" cy="291.4" r="3.4" fill="#d82040"/>
  <circle cx="624.7" cy="290.5" r="1.6" fill="#f05870"/>
  <polygon points="644.6,294.4 632,289.4 631.6,296.9" fill="#f03858"/>
  <polygon points="644.6,294.4 631.8,293.2 631.6,296.9" fill="#d02040"/>
  <!-- blue Z -->
  <polygon points="566,290 571.6,290.3 571.8,296 566.2,296.6" fill="#3838e0"/>
  <polygon points="566,290 571.6,290.3 571.4,291.8 566,291.6" fill="#5858f8"/>
  <circle cx="562.3" cy="296.6" r="3.3" fill="#4040e8"/>
  <circle cx="561.6" cy="295.8" r="1.5" fill="#6868ff"/>
  <polygon points="550.2,303.6 557.3,295.6 560.3,301.6" fill="#4848f0"/>
  <polygon points="550.2,303.6 558.8,298.6 560.3,301.6" fill="#3030c8"/>
  <!-- center -->
  <polygon points="586.5,280.2 590,283.9 586.5,287.8 583,283.9" fill="#f0b020"/>
  <polygon points="586.5,280.2 590,283.9 586.5,284.6 583,283.9" fill="#ffd860"/>
</g>

  <g id="vpicons">
  <!-- view cube shadow -->
  <ellipse cx="1034.2" cy="127.7" rx="20.6" ry="8.2" fill="#50545f" fill-opacity="0.26"/>
  <ellipse cx="1034.2" cy="126.6" rx="14.4" ry="5.6" fill="#50545f" fill-opacity="0.26"/>
  <!-- view cube -->
  <polygon points="1023.4,110.6 1034.2,103.2 1045.6,108.6 1045.2,120.9 1036.6,126.4 1023.8,122.4" fill="#555965"/>
  <polygon points="1026,107.8 1034.2,103.8 1043.4,106.9 1036,111" fill="#5b9270"/>
  <polygon points="1023.9,111.2 1036,112.9 1036,125.7 1024.2,122.1" fill="#4f80aa"/>
  <polygon points="1038.3,112.6 1045.2,108.9 1044.8,120.6 1038.3,125" fill="#a26a82"/>
  <!-- move -->
  <g fill="#c8cad2">
    <path d="M1016.1 83.4 H1017.1 V86 H1019.7 V87 H1017.1 V89.6 H1016.1 V87 H1013.5 V86 H1016.1 Z"/>
    <path d="M1016.6 81 L1018.5 83.7 H1014.7 Z M1016.6 92 L1018.5 89.3 H1014.7 Z M1011.1 86.5 L1013.8 84.6 V88.4 Z M1022.1 86.5 L1019.4 84.6 V88.4 Z"/>
  </g>
  <!-- magnifier -->
  <circle cx="1032.4" cy="85.3" r="4" fill="none" stroke="#c8cad2" stroke-width="0.9"/>
  <path d="M1035.5 88.4 L1038.6 91.2" stroke="#c8cad2" stroke-width="1.7" stroke-linecap="round"/>
  <!-- orbit -->
  <circle cx="1050.6" cy="86.5" r="4.6" fill="none" stroke="#c8cad2" stroke-width="0.9"/>
  <g fill="#c8cad2">
    <path d="M1051.8 81.9 L1049.6 80.6 V83.2 Z M1049.4 91.1 L1051.6 89.8 V92.4 Z M1055.2 87.7 L1053.9 85.5 H1056.5 Z M1046 85.3 L1044.7 87.5 H1047.3 Z"/>
  </g>
</g>

</svg>

<div class="abs" style="left:0;top:644px;width:1200px;height:12px;background:#3a3a3a"></div>

</body>
</html>
